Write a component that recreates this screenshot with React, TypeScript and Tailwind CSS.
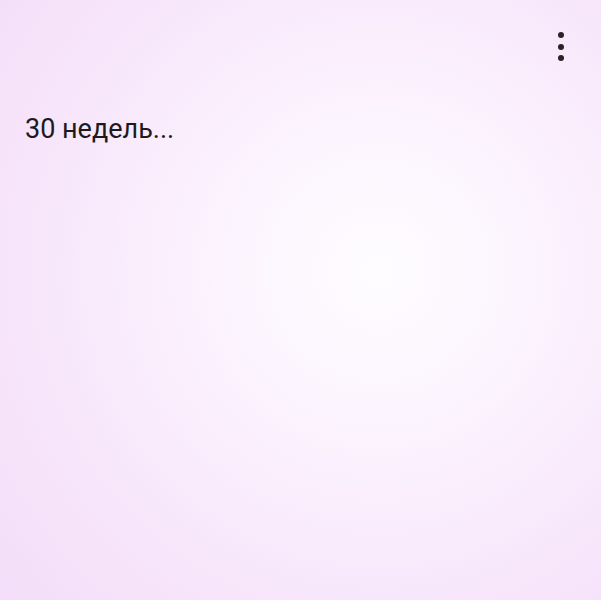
export default function App() {
  return (
    <main className="relative min-h-[600px] w-full overflow-hidden bg-[radial-gradient(circle_at_63%_45%,#fefcff_0%,#fcf4fe_30%,#f8e8fb_62%,#f3ddf8_100%)] font-['Roboto',sans-serif]">
      <div className="flex justify-end px-[37px] pt-[32px]">
        <button className="flex flex-col items-center gap-[5.5px]" aria-label="Меню">
          <span className="block h-[6px] w-[6px] rounded-full bg-[#2a2226]" />
          <span className="block h-[6px] w-[6px] rounded-full bg-[#2a2226]" />
          <span className="block h-[6px] w-[6px] rounded-full bg-[#2a2226]" />
        </button>
      </div>
      <p className="mt-[52px] pl-[25px] text-[27px] leading-[32px] text-[#1c1a1d]">
        30 недель...
      </p>
    </main>
  );
}
